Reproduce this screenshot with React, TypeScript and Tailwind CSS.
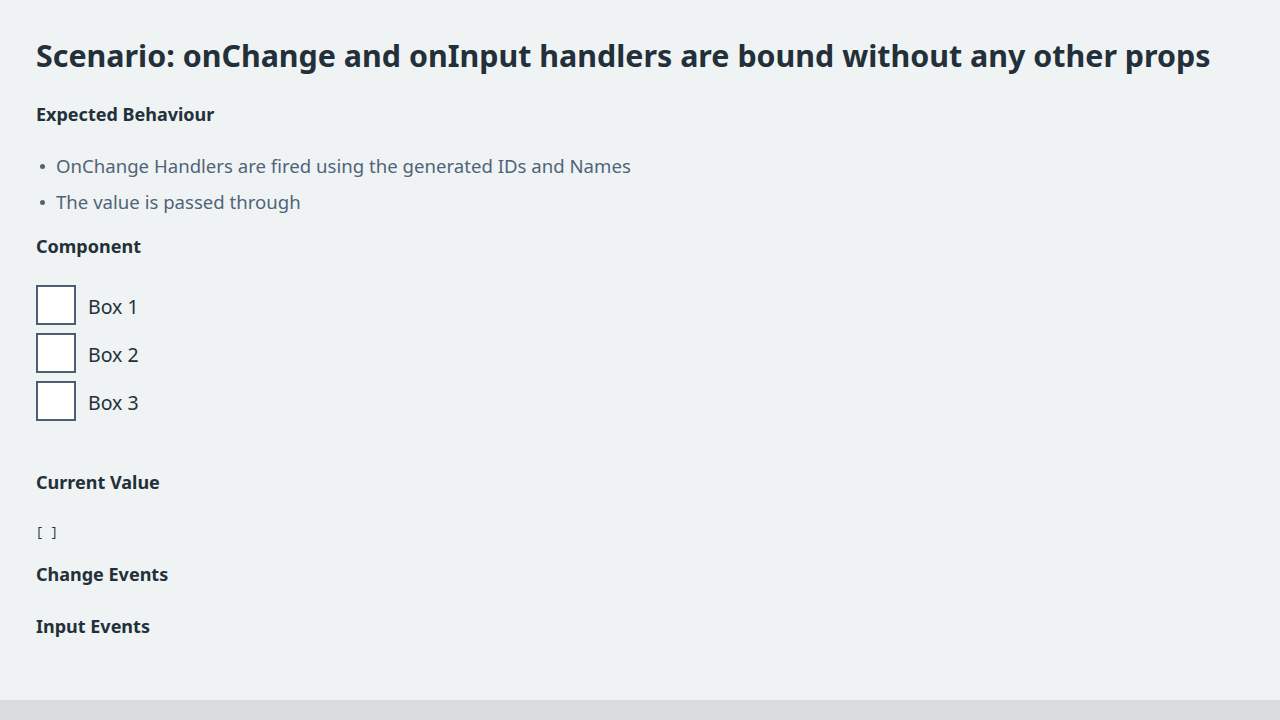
import React from "react";

export default function App() {
  const font = { fontFamily: '"Noto Sans", "Open Sans", sans-serif' };
  return (
    <div className="min-h-[720px] bg-[#d8dcde]" style={font}>
      <div className="h-[700px] bg-[#eff3f4] pl-[36px] pt-[36px] text-[#23303a]">
        <h1 className="text-[30.4px] leading-[40px] font-bold">
          Scenario: onChange and onInput handlers are bound without any other props
        </h1>
        <h2 className="mt-[26px] text-[18px] leading-[24px] font-bold">Expected Behaviour</h2>
        <ul className="mt-[22px] text-[18.6px] leading-[36px] text-[#4f6478]">
          <li className="flex items-center">
            <span className="mr-[11px] ml-[4px] inline-block h-[5px] w-[5px] rounded-full bg-[#4f6478]" />
            OnChange Handlers are fired using the generated IDs and Names
          </li>
          <li className="flex items-center">
            <span className="mr-[11px] ml-[4px] inline-block h-[5px] w-[5px] rounded-full bg-[#4f6478]" />
            The value is passed through
          </li>
        </ul>
        <h2 className="mt-[14px] text-[18px] leading-[24px] font-bold">Component</h2>
        <div className="mt-[27px] flex flex-col gap-[8px]">
          {["Box 1", "Box 2", "Box 3"].map((b) => (
            <label key={b} className="flex items-center">
              <span className="box-border h-[40px] w-[40px] border-2 border-[#4b5f72] bg-white" />
              <span className="ml-[12px] text-[19.5px] leading-[28px] pt-[4px] text-[#23303a]">{b}</span>
            </label>
          ))}
        </div>
        <h2 className="mt-[49px] text-[18px] leading-[24px] font-bold">Current Value</h2>
        <pre
          className="mt-[29px] text-[12px] leading-[20px] text-[#23303a]"
          style={{ fontFamily: '"Liberation Mono", monospace' }}
        >
          [ ]
        </pre>
        <h2 className="mt-[19px] text-[18px] leading-[24px] font-bold">Change Events</h2>
        <h2 className="mt-[28px] text-[18px] leading-[24px] font-bold">Input Events</h2>
      </div>
    </div>
  );
}
